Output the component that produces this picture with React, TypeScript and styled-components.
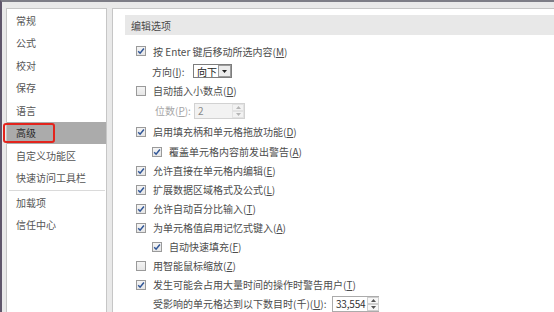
import React from "react";
import styled, { createGlobalStyle } from "styled-components";

const GlobalStyle = createGlobalStyle`
  html, body { margin: 0; padding: 0; background: #e9e9e9; }
  body { font-family: "Noto Sans CJK SC", "Noto Sans", sans-serif; }
  * { box-sizing: border-box; }
`;

const Frame = styled.div`
  position: relative;
  width: 554px;
  height: 312px;
  overflow: hidden;
  background: #e9e9e9;
  border-top: 2px solid #7d7d86;
  border-left: 2px solid #5f566b;
  padding: 6px 0 0 4px;
  display: flex;
  gap: 5px;
  font-size: 10px;
  color: #4c4c4c;
`;

const Nav = styled.div`
  width: 101px;
  flex: none;
  background: #fff;
  border: 1px solid #c6c6c6;
  border-bottom: none;
  display: flex;
  flex-direction: column;
`;

const NavItem = styled.div<{ $selected?: boolean }>`
  height: 22.5px;
  flex: none;
  display: flex;
  align-items: center;
  padding-left: 9px;
  white-space: nowrap;
  background: ${(p) => (p.$selected ? "#ababab" : "transparent")};
  color: ${(p) => (p.$selected ? "#2a2a2a" : "#555")};
`;

const NavSep = styled.div`
  height: 1px;
  margin: 1px 1px 0 2px;
  background: #dadada;
`;

const Highlight = styled.div`
  position: absolute;
  left: 1px;
  top: 121px;
  width: 52px;
  height: 20px;
  border: 2px solid #e3241d;
  border-radius: 3px;
  pointer-events: none;
`;

const Main = styled.div`
  flex: 1;
  background: #fff;
  border-top: 1px solid #c6c6c6;
  border-left: 1px solid #c6c6c6;
  padding: 6px 0 0 12px;
  display: flex;
  flex-direction: column;
`;

const SectionHeader = styled.div`
  height: 20px;
  flex: none;
  background: #e8e8e8;
  display: flex;
  align-items: center;
  padding-left: 6px;
  color: #4a4a4a;
`;

const Options = styled.div`
  margin-top: 6px;
  padding-left: 11px;
  display: flex;
  flex-direction: column;
`;

const Row = styled.div<{ $h: number; $indent?: number }>`
  height: ${(p) => p.$h}px;
  flex: none;
  display: flex;
  align-items: center;
  padding-left: ${(p) => p.$indent ?? 0}px;
  white-space: nowrap;
`;

const Box = styled.span`
  width: 10px;
  height: 10px;
  flex: none;
  border: 1px solid #9a9a9a;
  background: linear-gradient(#f4f4f4, #e6e6e6);
  margin-right: 7px;
  display: flex;
  align-items: center;
  justify-content: center;
`;

const Label = styled.span<{ $w?: number; $disabled?: boolean }>`
  display: inline-block;
  width: ${(p) => (p.$w ? `${p.$w}px` : "auto")};
  color: ${(p) => (p.$disabled ? "#a6a6a6" : "#4c4c4c")};
`;

const Select = styled.div`
  width: 39px;
  height: 14px;
  border: 1px solid #7d7d7d;
  background: #fff;
  display: flex;
  align-items: stretch;
`;

const SelectText = styled.span`
  flex: 1;
  padding-left: 3px;
  display: flex;
  align-items: center;
  color: #222;
`;

const SelectBtn = styled.span`
  width: 13px;
  border: 1px solid #9c9c9c;
  background: #ececec;
  display: flex;
  align-items: center;
  justify-content: center;
`;

const Spin = styled.div<{ $w: number; $disabled?: boolean }>`
  width: ${(p) => p.$w}px;
  height: 16px;
  border: 1px solid ${(p) => (p.$disabled ? "#d2d2d2" : "#ababab")};
  background: ${(p) => (p.$disabled ? "#f2f2f2" : "#fff")};
  display: flex;
  align-items: stretch;
  color: ${(p) => (p.$disabled ? "#8a8a8a" : "#333")};
`;

const SpinValue = styled.span`
  flex: 1;
  padding-left: 3px;
  display: flex;
  align-items: center;
  font-size: 10px;
  letter-spacing: -0.2px;
`;

const SpinBtns = styled.span`
  width: 12px;
  flex: none;
  display: flex;
  flex-direction: column;
  margin-left: 2px;
`;

const SpinBtn = styled.span<{ $disabled?: boolean }>`
  flex: 1;
  display: flex;
  align-items: center;
  justify-content: center;
  background: ${(p) => (p.$disabled ? "#f2f2f2" : "#f7f7f7")};
  border: 1px solid ${(p) => (p.$disabled ? "#e2e2e2" : "#cfcfcf")};
`;

const Check = ({ checked }: { checked?: boolean }) => (
  <Box>
    {checked && (
      <svg width="8" height="8" viewBox="0 0 8 8">
        <path d="M1.2 4.2 L3.1 6.2 L6.9 1.5" fill="none" stroke="#2f5597" strokeWidth="1.5" />
      </svg>
    )}
  </Box>
);

const Tri = ({ up, color = "#222" }: { up?: boolean; color?: string }) => (
  <svg width="5" height="3" viewBox="0 0 5 3">
    <path d={up ? "M0 3 L2.5 0 L5 3 Z" : "M0 0 L5 0 L2.5 3 Z"} fill={color} />
  </svg>
);

const Opt = ({ checked, indent, h, children }: { checked?: boolean; indent?: number; h: number; children: React.ReactNode }) => (
  <Row $h={h} $indent={indent}>
    <Check checked={checked} />
    <Label>{children}</Label>
  </Row>
);

export default function App() {
  const navTop = ["常规", "公式", "校对", "保存", "语言", "高级", "自定义功能区", "快速访问工具栏"];
  return (
    <>
      <GlobalStyle />
      <Frame>
        <Nav>
          {navTop.map((n) => (
            <NavItem key={n} $selected={n === "高级"}>{n}</NavItem>
          ))}
          <NavSep />
          <NavItem>加载项</NavItem>
          <NavItem>信任中心</NavItem>
        </Nav>
        <Main>
          <SectionHeader>编辑选项</SectionHeader>
          <Options>
            <Opt h={20} checked>按 Enter 键后移动所选内容(<u>M</u>)</Opt>
            <Row $h={20} $indent={16}>
              <Label $w={41}>方向(<u>I</u>):</Label>
              <Select>
                <SelectText>向下</SelectText>
                <SelectBtn><Tri /></SelectBtn>
              </Select>
            </Row>
            <Opt h={19}>自动插入小数点(<u>D</u>)</Opt>
            <Row $h={21} $indent={19}>
              <Label $w={39} $disabled>位数(<u>P</u>):</Label>
              <Spin $w={51} $disabled>
                <SpinValue>2</SpinValue>
                <SpinBtns>
                  <SpinBtn $disabled><Tri up color="#b5b5b5" /></SpinBtn>
                  <SpinBtn $disabled><Tri color="#b5b5b5" /></SpinBtn>
                </SpinBtns>
              </Spin>
            </Row>
            <Opt h={21} checked>启用填充柄和单元格拖放功能(<u>D</u>)</Opt>
            <Opt h={19} checked indent={16}>覆盖单元格内容前发出警告(<u>A</u>)</Opt>
            <Opt h={19} checked>允许直接在单元格内编辑(<u>E</u>)</Opt>
            <Opt h={19} checked>扩展数据区域格式及公式(<u>L</u>)</Opt>
            <Opt h={19} checked>允许自动百分比输入(<u>T</u>)</Opt>
            <Opt h={19} checked>为单元格值启用记忆式键入(<u>A</u>)</Opt>
            <Opt h={19} checked indent={16}>自动快速填充(<u>F</u>)</Opt>
            <Opt h={19}>用智能鼠标缩放(<u>Z</u>)</Opt>
            <Opt h={19} checked>发生可能会占用大量时间的操作时警告用户(<u>T</u>)</Opt>
            <Row $h={19} $indent={17}>
              <Label $w={179}>受影响的单元格达到以下数目时(千)(<u>U</u>):</Label>
              <Spin $w={47}>
                <SpinValue>33,554</SpinValue>
                <SpinBtns>
                  <SpinBtn><Tri up color="#555" /></SpinBtn>
                  <SpinBtn><Tri color="#555" /></SpinBtn>
                </SpinBtns>
              </Spin>
            </Row>
          </Options>
        </Main>
        <Highlight />
      </Frame>
    </>
  );
}
